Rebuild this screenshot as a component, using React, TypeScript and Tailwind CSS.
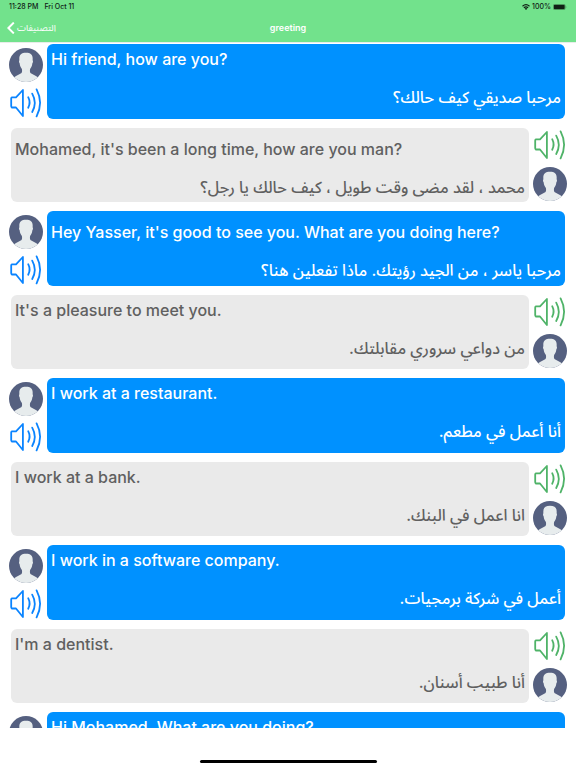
type Speaker = "them" | "me";

interface Message {
  from: Speaker;
  en: string;
  ar: string;
  long?: boolean;
}

const messages: Message[] = [
  { from: "them", en: "Hi friend, how are you?", ar: "مرحبا صديقي كيف حالك؟" },
  {
    from: "me",
    en: "Mohamed, it's been a long time, how are you man?",
    ar: "محمد ، لقد مضى وقت طويل ، كيف حالك يا رجل؟",
    long: true,
  },
  {
    from: "them",
    en: "Hey Yasser, it's good to see you. What are you doing here?",
    ar: "مرحبا ياسر ، من الجيد رؤيتك. ماذا تفعلين هنا؟",
    long: true,
  },
  { from: "me", en: "It's a pleasure to meet you.", ar: "من دواعي سروري مقابلتك." },
  { from: "them", en: "I work at a restaurant.", ar: "أنا أعمل في مطعم." },
  { from: "me", en: "I work at a bank.", ar: "انا اعمل في البنك." },
  { from: "them", en: "I work in a software company.", ar: "أعمل في شركة برمجيات." },
  { from: "me", en: "I'm a dentist.", ar: "أنا طبيب أسنان." },
  { from: "them", en: "Hi Mohamed, What are you doing?", ar: "" },
];

function Avatar() {
  return (
    <svg viewBox="0 0 34 34" className="size-[34px] shrink-0" aria-hidden="true">
      <circle cx="17" cy="17" r="17" fill="#556080" />
      <path
        fill="#e7eced"
        d="M5.2 29.2C7.5 27.4 10.6 26.3 12.2 25.2C13.2 24.4 13.2 22.6 12.9 20.9C11.4 19.3 10.9 17.6 10.7 15.6C9.9 14.6 9.8 13 10.4 12.2C9.8 7 12 4.8 17 4.8C22 4.8 24.2 7 23.6 12.2C24.2 13 24.1 14.6 23.3 15.6C23.1 17.6 22.6 19.3 21.1 20.9C20.8 22.6 20.8 24.4 21.8 25.2C23.4 26.3 26.5 27.4 28.8 29.2A17 17 0 0 1 5.2 29.2Z"
      />
    </svg>
  );
}

function PlayButton({ tone, label }: { tone: string; label: string }) {
  return (
    <button type="button" aria-label={label} className={`block shrink-0 ${tone}`}>
      <svg
        viewBox="0 0 32 30"
        className="h-[30px] w-8"
        fill="none"
        stroke="currentColor"
        strokeWidth="1.8"
        strokeLinecap="round"
        strokeLinejoin="round"
      >
        <path d="M1.9 9.3H6L12.9 2V28L6 19.5H1.9Q1.2 19 1.2 18V10.5Q1.2 9.5 1.9 9.3Z" />
        <path d="M18.2 9.2Q21 14.6 18.2 19.8" />
        <path d="M22.2 5.6Q27.4 14.8 22.2 24" />
        <path d="M26.6 1.4Q33.6 14.8 26.6 28.4" />
      </svg>
    </button>
  );
}

function Bubble({ message }: { message: Message }) {
  const colors =
    message.from === "them"
      ? "h-[75px] bg-[#0091ff] text-white"
      : "h-[74px] bg-[#eaeaea] text-[#606060]";
  return (
    <div className={`min-w-0 flex-1 rounded-md px-1 ${colors} ${message.long ? "pt-[11px]" : "pt-[5px]"}`}>
      <p className="text-[16px] leading-5 font-medium whitespace-nowrap">{message.en}</p>
      <p dir="rtl" lang="ar" className="mt-4 h-6 text-[16px] leading-6 font-medium whitespace-nowrap">
        {message.ar}
      </p>
    </div>
  );
}

function MessageRow({ message }: { message: Message }) {
  if (message.from === "them") {
    return (
      <li className="flex gap-1 pr-[11px] pl-[9px]">
        <div className="flex w-[34px] flex-col items-center gap-1.5 pt-1">
          <Avatar />
          <PlayButton tone="text-[#0a84ff]" label={`Play: ${message.en}`} />
        </div>
        <Bubble message={message} />
      </li>
    );
  }
  return (
    <li className="flex gap-1 pr-[9px] pl-[11px]">
      <Bubble message={message} />
      <div className="flex w-[34px] flex-col items-center gap-[7px] pt-0.5">
        <PlayButton tone="text-[#4fb368]" label={`Play: ${message.en}`} />
        <Avatar />
      </div>
    </li>
  );
}

function StatusBar() {
  return (
    <div className="flex h-[14px] items-center justify-between px-[9px] text-[7px] leading-[14px] font-medium text-[#102015]">
      <div className="flex gap-1.5">
        <span>11:28 PM</span>
        <span>Fri Oct 11</span>
      </div>
      <div className="flex items-center gap-0.5">
        <svg viewBox="0 0 16 12" className="h-1.5 w-2" fill="none" stroke="currentColor" strokeWidth="2.4">
          <path d="M1 4.6Q8 -1.8 15 4.6" />
          <path d="M3.8 7.6Q8 3.6 12.2 7.6" />
          <path d="M8 12L5.2 9.2Q8 7 10.8 9.2Z" fill="currentColor" stroke="none" />
        </svg>
        <span>100%</span>
        <svg viewBox="0 0 28 12" className="h-1.5 w-3.5" fill="currentColor">
          <rect x="0.5" y="0.5" width="24" height="11" rx="3" fill="none" stroke="currentColor" opacity="0.5" />
          <rect x="1.6" y="1.6" width="21.8" height="8.8" rx="2" />
          <path d="M25.8 4Q27.6 6 25.8 8Z" opacity="0.6" />
        </svg>
      </div>
    </div>
  );
}

export default function App() {
  return (
    <div className="flex h-screen flex-col bg-white font-['Inter','Noto_Sans_Arabic','DejaVu_Sans',sans-serif]">
      <header className="h-[42px] shrink-0 bg-[#72e28c]">
        <StatusBar />
        <nav className="grid h-7 grid-cols-3 items-center px-[7px] text-white">
          <button type="button" className="flex items-center gap-0.5 justify-self-start">
            <svg
              viewBox="0 0 8 12"
              className="h-3 w-2"
              fill="none"
              stroke="currentColor"
              strokeWidth="2"
              strokeLinejoin="miter"
            >
              <path d="M6.8 0.6L1.4 6L6.8 11.4" />
            </svg>
            <span dir="rtl" lang="ar" className="text-[9px] leading-3">
              التصنيفات
            </span>
          </button>
          <h1 className="text-center text-[9px] leading-3 font-semibold">greeting</h1>
        </nav>
      </header>
      <main className="min-h-0 flex-1 overflow-hidden border-t border-[#e8ece9] pt-px">
        <ul className="flex flex-col gap-[9px]">
          {messages.map((message) => (
            <MessageRow key={message.en} message={message} />
          ))}
        </ul>
      </main>
      <footer className="flex h-10 shrink-0 items-end justify-center pb-[5px]">
        <div className="h-[3px] w-[177px] rounded-full bg-black" />
      </footer>
    </div>
  );
}
